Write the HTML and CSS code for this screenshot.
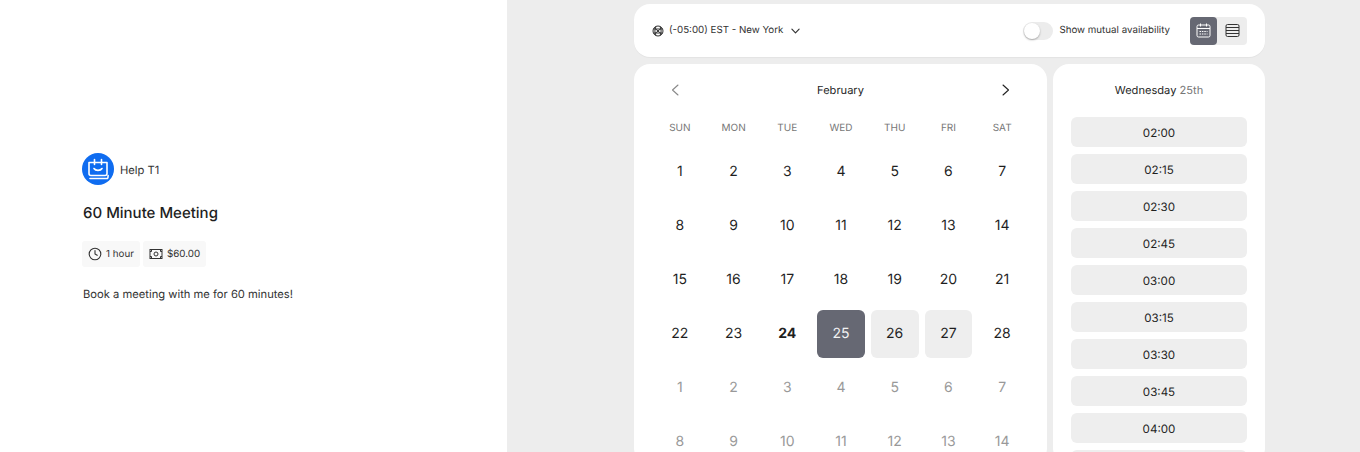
FILE: index.html
```html
<!DOCTYPE html>
<html>
<head>
    <title>60 Minute Meeting</title>
    <link rel="stylesheet" href="styles.css">
</head>
<body>
    <div class="page">
        <div class="info-pane">
            <div class="host">
                <span class="host-logo">
                    <svg width="32" height="32" viewBox="0 0 32 32" fill="none" stroke="#fff" stroke-width="1.6" stroke-linecap="round" stroke-linejoin="round">
                        <path d="M7 9.500h18v11c0 1.200-.8 2-2 2H9c-1.200 0-2-.8-2-2z"/>
                        <path d="M12.500 6.500v5M19.500 6.500v5"/>
                        <path d="M12 15.500c1.500 2.500 6.500 2.500 8 0"/>
                        <path d="M8 25.500h17.500c.6-.5.6-1.500.6-3"/>
                    </svg>
                </span>
                <span class="host-name">Help T1</span>
            </div>
            <h1 class="meeting-title">60 Minute Meeting</h1>
            <div class="tags">
                <span class="tag">
                    <svg width="14" height="14" viewBox="0 0 14 14" fill="none" stroke="#333" stroke-width="1.1" stroke-linecap="round" stroke-linejoin="round">
                        <circle cx="7" cy="7" r="5.8"/>
                        <path d="M7 3.600V7l2.200 1.300"/>
                    </svg>
                    1 hour
                </span>
                <span class="tag">
                    <svg width="14" height="14" viewBox="0 0 14 14" fill="none" stroke="#333" stroke-width="1">
                        <rect x="1" y="2.500" width="12" height="9"/>
                        <circle cx="7" cy="7" r="2"/>
                        <path d="M1 4.500h1.500V2.500M13 4.500h-1.500V2.500M1 9.500h1.500v2M13 9.500h-1.500v2"/>
                    </svg>
                    $60.00
                </span>
            </div>
            <p class="meeting-desc">Book a meeting with me for 60 minutes!</p>
        </div>

        <div class="booking-pane">
            <div class="booking-col">
                <div class="topbar">
                    <div class="tz">
                        <svg width="12" height="12" viewBox="0 0 12 12" fill="none" stroke="#333" stroke-width="1">
                            <circle cx="6" cy="6" r="5"/>
                            <path d="M1.500 4h9M1.500 8h9M4 1.500c-1.500 3-1.500 6 0 9M8 1.500c1.500 3 1.500 6 0 9M2 2.500l8 7M10 2.500l-8 7"/>
                        </svg>
                        <span>(-05:00) EST - New York</span>
                        <svg class="tz-caret" width="9" height="6" viewBox="0 0 10 6" fill="none" stroke="#333" stroke-width="1.3" stroke-linecap="round" stroke-linejoin="round">
                            <path d="M1 1l4 4 4-4"/>
                        </svg>
                    </div>
                    <div class="topbar-right">
                        <span class="switch"><span class="knob"></span></span>
                        <span class="switch-label">Show mutual availability</span>
                        <div class="view-toggle">
                            <span class="view-btn active">
                                <svg width="15" height="15" viewBox="0 0 15 15" fill="none" stroke="#fff" stroke-width="1">
                                    <rect x="1" y="2" width="13" height="12" rx="1.5"/>
                                    <path d="M1 5.500h13M4.500 .5v3M10.500 .5v3"/>
                                    <path d="M3.500 8.500h8M3.500 11h8" stroke-dasharray="1.5 .9"/>
                                </svg>
                            </span>
                            <span class="view-btn wide">
                                <svg width="15" height="15" viewBox="0 0 15 15" fill="none" stroke="#333" stroke-width="1">
                                    <rect x="1" y="1.500" width="13" height="12" rx="1.500"/>
                                    <path d="M1 4.500h13M1 7.500h13M1 10.500h13"/>
                                </svg>
                            </span>
                        </div>
                    </div>
                </div>
                <div class="panels">
                    <div class="calendar">
                        <div class="cal-head">
                            <svg width="8" height="12" viewBox="0 0 8 12" fill="none" stroke="#888" stroke-width="1.1" stroke-linecap="round" stroke-linejoin="round">
                                <path d="M7 1L1.500 6 7 11"/>
                            </svg>
                            <span>February</span>
                            <svg width="8" height="12" viewBox="0 0 8 12" fill="none" stroke="#222" stroke-width="1.1" stroke-linecap="round" stroke-linejoin="round">
                                <path d="M1 1l5.500 5L1 11"/>
                            </svg>
                        </div>
                        <div class="weekdays">
                            <span>SUN</span><span>MON</span><span>TUE</span><span>WED</span><span>THU</span><span>FRI</span><span>SAT</span>
                        </div>
                        <div class="days" id="days"></div>
                    </div>
                    <div class="slots">
                        <div class="slots-head">Wednesday <span>25th</span></div>
                        <div class="slot-list" id="slots"></div>
                    </div>
                </div>
            </div>
        </div>
    </div>

    <script>
        // Fill the month grid
        const daysEl = document.getElementById('days');
        const dayClass = { 24: 'today', 25: 'selected', 26: 'open', 27: 'open' };
        for (let d = 1; d <= 28; d++) {
            const cell = document.createElement('span');
            cell.className = 'day ' + (dayClass[d] || '');
            cell.textContent = d;
            daysEl.appendChild(cell);
        }
        for (let d = 1; d <= 14; d++) {
            const cell = document.createElement('span');
            cell.className = 'day muted';
            cell.textContent = d;
            daysEl.appendChild(cell);
        }

        // Fill the time slots, the last one only peeks in at the fold
        const slotsEl = document.getElementById('slots');
        ['02:00', '02:15', '02:30', '02:45', '03:00', '03:15', '03:30', '03:45', '04:00', ''].forEach(t => {
            const slot = document.createElement('div');
            slot.className = 'slot';
            slot.textContent = t;
            slotsEl.appendChild(slot);
        });
    </script>
</body>
</html>
```

FILE: styles.css
```css
html, body {
    height: 100%;
    margin: 0;
    overflow: hidden;
}
body {
    font-family: Inter, "Liberation Sans", sans-serif;
    color: #1f1f1f;
    background-color: #fff;
    text-rendering: geometricPrecision;
}
.page {
    display: flex;
    height: 452px;
}
.info-pane {
    box-sizing: border-box;
    width: 507px;
    padding: 153px 0 0 82px;
}
.host {
    display: flex;
    align-items: center;
    gap: 6px;
}
.host-logo {
    display: flex;
    width: 32px;
    height: 32px;
    border-radius: 50%;
    background-color: #0f6cf0;
}
.host-name {
    padding-top: 1px;
    font-size: 11.2px;
    color: #333;
}
.meeting-title {
    margin: 16px 0 0;
    padding-left: 1px;
    font-size: 15px;
    line-height: 24px;
    font-weight: 500;
}
.tags {
    display: flex;
    gap: 3px;
    margin-top: 16px;
}
.tag {
    display: flex;
    align-items: center;
    gap: 4px;
    height: 26px;
    padding: 0 6px;
    font-size: 9.8px;
    color: #333;
    background-color: #f8f8f8;
    border-radius: 3px;
}
.meeting-desc {
    margin: 18px 0 0;
    padding-left: 1px;
    font-size: 11.2px;
    line-height: 18px;
    color: #333;
}
.booking-pane {
    flex: 1;
    min-width: 0;
    background-color: #ededed;
    padding: 4px 0 0 127px;
}
.booking-col {
    width: 631px;
}
.topbar {
    box-sizing: border-box;
    display: flex;
    align-items: center;
    justify-content: space-between;
    height: 53px;
    padding: 0 18px;
    background-color: #fff;
    border-radius: 16px;
    box-shadow: 0 1px 1px rgba(0, 0, 0, 0.04);
}
.tz {
    display: flex;
    align-items: center;
    gap: 5px;
    font-size: 9.75px;
    color: #333;
}
.tz-caret {
    margin-left: 3px;
}
.topbar-right {
    display: flex;
    align-items: center;
}
.switch {
    display: flex;
    align-items: center;
    box-sizing: border-box;
    width: 30px;
    height: 18px;
    padding: 1px;
    background-color: #ececec;
    border-radius: 9px;
}
.knob {
    width: 16px;
    height: 16px;
    background-color: #fff;
    border-radius: 50%;
    box-shadow: 0 1px 2px rgba(0, 0, 0, 0.3);
}
.switch-label {
    margin-left: 6px;
    font-size: 9.75px;
    color: #333;
}
.view-toggle {
    display: flex;
    margin-left: 20px;
    background-color: #ededed;
    border-radius: 4px;
}
.view-btn {
    display: flex;
    align-items: center;
    justify-content: center;
    width: 27px;
    height: 28px;
}
.view-btn.wide {
    width: 30px;
}
.view-btn.active {
    background-color: #666873;
    border-radius: 4px;
}
.panels {
    display: flex;
    gap: 6px;
    margin-top: 7px;
}
.calendar {
    box-sizing: border-box;
    width: 413px;
    height: 400px;
    padding: 0 18px 0 19px;
    background-color: #fff;
    border-radius: 16px;
}
.cal-head {
    display: flex;
    align-items: center;
    justify-content: space-between;
    height: 51px;
    padding: 0 19px 1px 18px;
    font-size: 11.1px;
}
.weekdays {
    display: grid;
    grid-template-columns: repeat(7, 1fr);
    height: 22px;
    font-size: 10px;
    line-height: 24px;
    text-align: center;
    color: #777;
}
.days {
    display: grid;
    grid-template-columns: repeat(7, 1fr);
    grid-auto-rows: 54px;
    margin-top: 7px;
}
.day {
    display: flex;
    align-items: center;
    justify-content: center;
    margin: 3px;
    padding-bottom: 1px;
    font-size: 14px;
    border-radius: 6px;
}
.day.today {
    font-weight: 700;
}
.day.selected {
    background-color: #666873;
    color: #f2f2f2;
}
.day.open {
    background-color: #eeeeee;
}
.day.muted {
    color: #999;
}
.slots {
    box-sizing: border-box;
    width: 212px;
    height: 400px;
    padding: 0 18px;
    background-color: #fff;
    border-radius: 16px;
}
.slots-head {
    height: 52px;
    font-size: 11.1px;
    line-height: 52px;
    text-align: center;
}
.slots-head span {
    color: #777;
}
.slot-list {
    display: flex;
    flex-direction: column;
    gap: 7px;
    margin-top: 1px;
}
.slot {
    flex: none;
    height: 30px;
    font-size: 11.6px;
    line-height: 32px;
    text-align: center;
    background-color: #eeeeee;
    border-radius: 6px;
}
```
